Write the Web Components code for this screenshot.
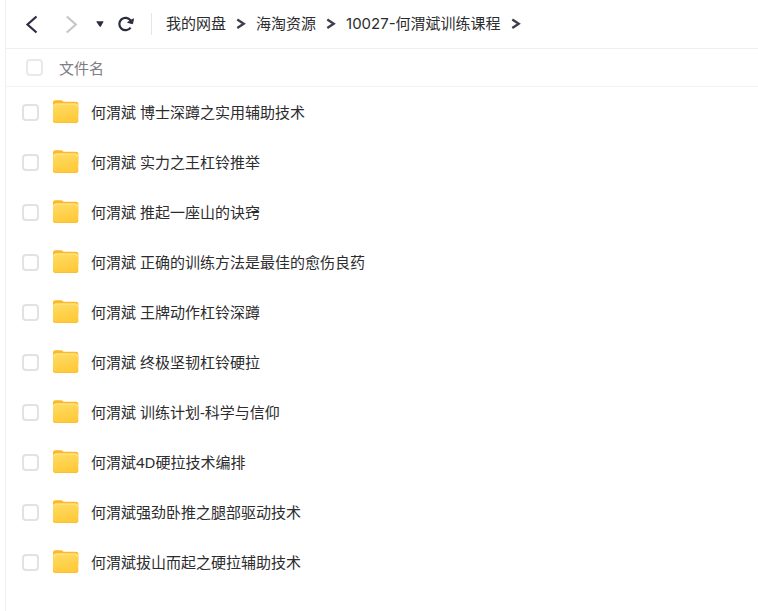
<!DOCTYPE html>
<html lang="zh-CN">
<head>
<meta charset="utf-8">
<meta name="viewport" content="width=device-width, initial-scale=1">
<title>我的网盘</title>
<style>
  body {
    margin: 0;
    background: #fff;
    color: #2c2c2e;
    font: 15px/20px "Noto Sans", "Noto Sans CJK SC", sans-serif;
  }
</style>
</head>
<body>
<drive-browser>
  <drive-toolbar slot="toolbar">
    <crumb-item>我的网盘</crumb-item>
    <crumb-item>海淘资源</crumb-item>
    <crumb-item>10027-何渭斌训练课程</crumb-item>
  </drive-toolbar>
  <file-header slot="header">文件名</file-header>
  <file-row>何渭斌 博士深蹲之实用辅助技术</file-row>
  <file-row>何渭斌 实力之王杠铃推举</file-row>
  <file-row>何渭斌 推起一座山的诀窍</file-row>
  <file-row>何渭斌 正确的训练方法是最佳的愈伤良药</file-row>
  <file-row>何渭斌 王牌动作杠铃深蹲</file-row>
  <file-row>何渭斌 终极坚韧杠铃硬拉</file-row>
  <file-row>何渭斌 训练计划-科学与信仰</file-row>
  <file-row>何渭斌4D硬拉技术编排</file-row>
  <file-row>何渭斌强劲卧推之腿部驱动技术</file-row>
  <file-row>何渭斌拔山而起之硬拉辅助技术</file-row>
</drive-browser>

<script>
const CHECKBOX_STYLE = `
  input {
    appearance: none;
    -webkit-appearance: none;
    flex: none;
    width: 17px;
    height: 17px;
    margin: 0;
    border: 2px solid #e2e2e4;
    border-radius: 4px;
    background: #fff;
    cursor: pointer;
  }

  input:checked {
    border-color: #06a7ff;
    background: #06a7ff;
  }
`;

class DriveBrowser extends HTMLElement {
  constructor() {
    super();
    this.attachShadow({ mode: "open" });
    this.shadowRoot.innerHTML = `
      <style>
        :host {
          display: block;
          box-sizing: border-box;
          min-height: 100vh;
          margin-left: 5px;
          border-left: 1px solid #f0f0f2;
        }
      </style>
      <slot name="toolbar"></slot>
      <main>
        <slot name="header"></slot>
        <slot></slot>
      </main>
    `;
    this.addEventListener("toggle-all", (event) => {
      this.querySelectorAll("file-row").forEach((row) => {
        row.checked = event.detail;
      });
    });
  }
}

class DriveToolbar extends HTMLElement {
  constructor() {
    super();
    this.attachShadow({ mode: "open" });
    this.shadowRoot.innerHTML = `
      <style>
        :host {
          display: flex;
          align-items: center;
          box-sizing: border-box;
          height: 49px;
          padding-left: 16px;
          border-bottom: 1px solid #eeeef0;
          font-family: Inter, "Noto Sans CJK SC", sans-serif;
        }

        .controls {
          display: flex;
          align-items: center;
        }

        button {
          display: flex;
          align-items: center;
          justify-content: center;
          width: 20px;
          height: 24px;
          padding: 0;
          border: 0;
          background: transparent;
          color: #2b2d3c;
          cursor: pointer;
        }

        button:disabled {
          color: #c6c6ca;
          cursor: default;
        }

        .forward {
          margin-left: 20px;
        }

        .history {
          margin-left: 8px;
        }

        .reload {
          margin-left: 6px;
        }

        .divider {
          width: 1px;
          height: 22px;
          margin: 0 14px 0 15px;
          background: #e6e6e8;
        }

        nav {
          display: flex;
        }
      </style>
      <div class="controls">
        <button class="back" type="button" aria-label="后退">
          <svg width="20" height="20" viewBox="0 0 20 20" fill="none" stroke="currentColor" stroke-width="2.2"><path d="M14.500 2.500 5.500 10.500l9 8"/></svg>
        </button>
        <button class="forward" type="button" aria-label="前进" disabled>
          <svg width="20" height="20" viewBox="0 0 20 20" fill="none" stroke="currentColor" stroke-width="2.2"><path d="m4.800 2.500 9 8-9 8"/></svg>
        </button>
        <button class="history" type="button" aria-label="历史记录">
          <svg width="10" height="10" viewBox="0 0 10 10" fill="currentColor"><path d="M1.800 2.200h6.200q.8 0 .4.800L5.800 7.600q-.6.900-1.200 0L1.500 3q-.5-.8.3-.8z"/></svg>
        </button>
        <button class="reload" type="button" aria-label="刷新">
          <svg width="18" height="18" viewBox="0 0 18 18"><path d="M13.600 12.600a6.200 6.200 0 1 1 0-7.200" fill="none" stroke="currentColor" stroke-width="2.200"/><path d="m16.400 3.800-.8 4.900-5-1.300z" fill="currentColor" stroke="currentColor" stroke-linejoin="round"/></svg>
        </button>
      </div>
      <span class="divider"></span>
      <nav aria-label="路径"><slot></slot></nav>
    `;
  }
}

class CrumbItem extends HTMLElement {
  constructor() {
    super();
    this.attachShadow({ mode: "open" });
    this.shadowRoot.innerHTML = `
      <style>
        :host {
          display: flex;
          align-items: center;
          white-space: nowrap;
        }

        a {
          color: inherit;
          text-decoration: none;
        }

        svg {
          width: 10px;
          height: 12px;
          margin: 0 10px;
        }
      </style>
      <a href="#"><slot></slot></a>
      <svg viewBox="0 0 10 12" fill="none" stroke="#3d3f4c" stroke-width="2.400" aria-hidden="true"><path d="m1.300 1.400 6.400 4.300-6.400 4.300"/></svg>
    `;
  }
}

class FileHeader extends HTMLElement {
  constructor() {
    super();
    this.attachShadow({ mode: "open" });
    this.shadowRoot.innerHTML = `
      <style>
        ${CHECKBOX_STYLE}

        :host {
          display: block;
          border-bottom: 1px solid #f3f3f5;
          color: #7c7d85;
        }

        label {
          display: flex;
          align-items: center;
          gap: 16px;
          height: 37px;
          padding-left: 20px;
        }

        input {
          border-color: #e9e9eb;
        }
      </style>
      <label><input type="checkbox"><slot></slot></label>
    `;
    const input = this.shadowRoot.querySelector("input");
    input.addEventListener("change", () => {
      this.dispatchEvent(new CustomEvent("toggle-all", { bubbles: true, detail: input.checked }));
    });
  }
}

class FileRow extends HTMLElement {
  constructor() {
    super();
    this.attachShadow({ mode: "open" });
    this.shadowRoot.innerHTML = `
      <style>
        ${CHECKBOX_STYLE}

        :host {
          display: block;
        }

        :host(:hover) {
          background: #fafafc;
        }

        label {
          display: flex;
          align-items: center;
          height: 50px;
          padding-left: 16px;
        }

        svg {
          flex: none;
          width: 26px;
          height: 24px;
          margin: 0 12px 0 14px;
        }
      </style>
      <label>
        <input type="checkbox">
        <svg viewBox="0 0 26 24" aria-hidden="true">
          <defs>
            <linearGradient id="front" x1="0" y1="0" x2="0.3" y2="1">
              <stop offset="0" stop-color="#ffdc66"/>
              <stop offset="1" stop-color="#ffca3a"/>
            </linearGradient>
          </defs>
          <path d="M0 2.500Q0 .2 2.300.2h5.700q1 0 1.800.8l.8.700h12.400q2.300 0 2.300 2.300V14H0z" fill="#fdb827"/>
          <path d="M0 6Q0 3.500 2.500 3.500h20.300q2.500 0 2.500 2.500v14.500q0 2.500-2.500 2.500H2.500Q0 23 0 20.500z" fill="url(#front)"/>
          <path d="M1 6.500Q1 4 3 4h19.300q2 0 2 2.500" fill="none" stroke="#ffe896" stroke-width="1"/>
          <path d="M.5 20.500q0 2 2 2h20.300q2 0 2-2" fill="none" stroke="#fcbf2e" stroke-width="1"/>
        </svg>
        <slot></slot>
      </label>
    `;
  }

  get checked() {
    return this.shadowRoot.querySelector("input").checked;
  }

  set checked(value) {
    this.shadowRoot.querySelector("input").checked = value;
  }
}

customElements.define("drive-browser", DriveBrowser);
customElements.define("drive-toolbar", DriveToolbar);
customElements.define("crumb-item", CrumbItem);
customElements.define("file-header", FileHeader);
customElements.define("file-row", FileRow);
</script>
</body>
</html>
